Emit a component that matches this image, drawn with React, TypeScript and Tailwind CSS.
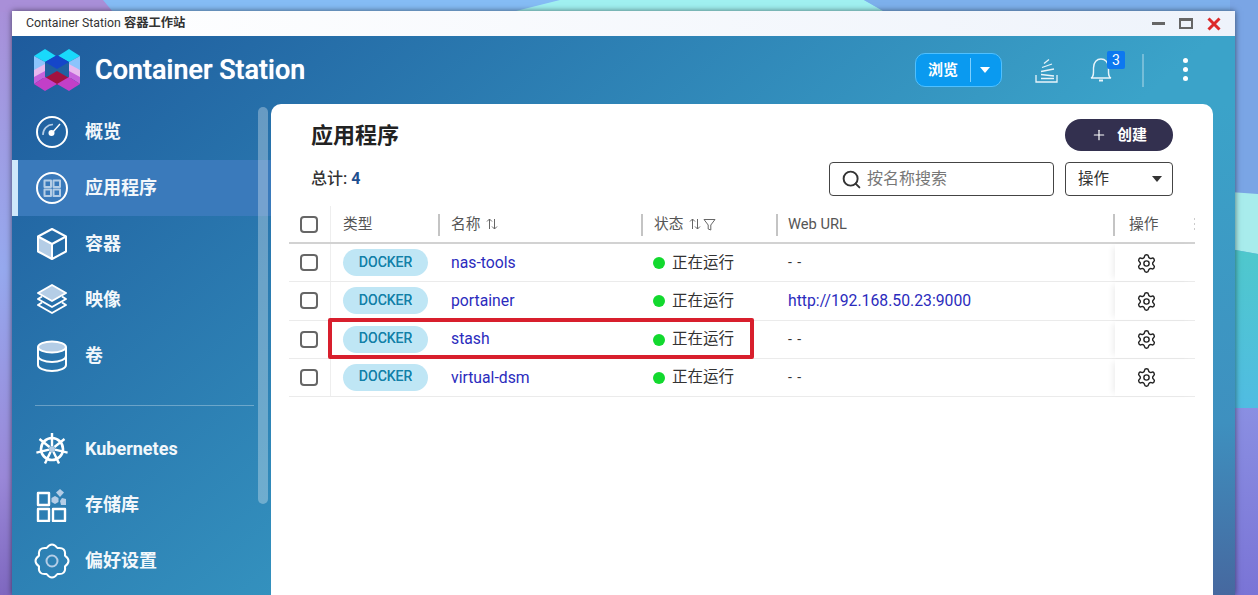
import React from 'react';
import { Search, Settings, Plus } from 'lucide-react';

const pale = '#b4cde6';

function Logo() {
    return (
        <svg width="46" height="43" viewBox="0 0 46 43">
            <path d="M0 7 11 0 22 7 11 13Z" fill="#19d9fb" />
            <path d="M24 7 35 0 46 7 35 13Z" fill="#19d9fb" />
            <path d="M0 7 11 13V20L0 21Z" fill="#8cc4fc" />
            <path d="M46 7 35 13V20L46 21Z" fill="#8cc4fc" />
            <path d="M0 21 11 15V29L0 28Z" fill="#e8b8ee" />
            <path d="M46 21 35 15V29L46 28Z" fill="#e8b8ee" />
            <path d="M0 28 11 22 11 28 0 35Z" fill="#c462dc" />
            <path d="M46 28 35 22 35 28 46 35Z" fill="#c462dc" />
            <path d="M11 13 23 6 35 13 23 20Z" fill="#1546c9" />
            <path d="M11 29 23 22 35 29 23 36Z" fill="#a1123f" />
            <path d="M0 35 11 28 23 35 11 42Z" fill="#c23fc8" />
            <path d="M23 35 35 28 46 35 35 42Z" fill="#c23fc8" />
        </svg>
    );
}

function NavIcon({ name }: { name: string }) {
    const common = { width: 34, height: 34, viewBox: '0 0 34 34', fill: 'none', stroke: 'white', strokeWidth: 2, strokeLinejoin: 'round' as const };
    if (name === 'overview') {
        return (
            <svg {...common}>
                <circle cx="17" cy="17" r="15" />
                <path d="M8 20A10 10 0 0 1 18 9.500" stroke={pale} strokeWidth="1.6" />
                <path d="M17 18 25 9" strokeWidth="1.4" />
                <circle cx="16.500" cy="18" r="3" fill="white" stroke="none" />
            </svg>
        );
    }
    if (name === 'apps') {
        return (
            <svg {...common}>
                <circle cx="17" cy="17" r="15" />
                <rect x="9.500" y="9.500" width="6.500" height="6.500" stroke={pale} strokeWidth="2" />
                <rect x="18.500" y="9.500" width="6.500" height="6.500" stroke={pale} strokeWidth="2" />
                <rect x="9.500" y="18.500" width="6.500" height="6.500" stroke={pale} strokeWidth="2" />
                <rect x="18.500" y="18.500" width="6.500" height="6.500" stroke={pale} strokeWidth="2" />
            </svg>
        );
    }
    if (name === 'container') {
        return (
            <svg {...common}>
                <path d="M3 9.500 17 17V32L3 24.500Z" fill={pale} stroke="none" />
                <path d="M17 2 31 9.500V24.500L17 32 3 24.500V9.500Z" />
                <path d="M3 9.500 17 17 31 9.500M17 17V32" />
            </svg>
        );
    }
    if (name === 'image') {
        return (
            <svg {...common}>
                <path d="M17 2 31 10 17 18 3 10Z" fill={pale} />
                <path d="M7 13.500 3 16 17 24 31 16 27 13.500" />
                <path d="M7 19.500 3 22 17 30 31 22 27 19.500" />
            </svg>
        );
    }
    if (name === 'volume') {
        return (
            <svg {...common}>
                <ellipse cx="17" cy="8" rx="14" ry="5.500" fill={pale} />
                <path d="M3 8V26C3 29 9 32 17 32S31 29 31 26V8" />
                <path d="M3 17C3 20 9 23 17 23S31 20 31 17" />
            </svg>
        );
    }
    if (name === 'kube') {
        return (
            <svg {...common}>
                <circle cx="17" cy="17" r="11" strokeWidth="2.600" />
                <circle cx="17" cy="17" r="3" fill={pale} stroke="none" />
                <path d="M17 1V14M29.500 7 19.500 15M32.600 20.600 20 17.700M24 31.400 18.400 19.700M10 31.400 15.600 19.700M1.400 20.600 14 17.700M4.500 7 14.500 15" strokeWidth="2.400" />
            </svg>
        );
    }
    if (name === 'registry') {
        return (
            <svg {...common} strokeWidth={2.4}>
                <rect x="3" y="5" width="11" height="12" />
                <rect x="3" y="21" width="11" height="12" />
                <rect x="18" y="21" width="12" height="12" />
                <path d="M25 1 29 4.500 25 9 21 4.500Z" fill={pale} stroke="none" />
                <path d="M20 8 23.500 10V14L20 16 16.500 14V10Z" fill={pale} stroke="none" />
                <path d="M27 10 31 11V17H26L25 13Z" fill={pale} stroke="none" />
            </svg>
        );
    }
    return (
        <svg {...common} className="overflow-visible">
            <path d="M11.600 4Q17 -3 22.400 4 31.100 2.900 30 11.600 37 17 30 22.400 31.100 31.100 22.400 30 17 37 11.600 30 2.900 31.100 4 22.400 -3 17 4 11.600 2.900 2.900 11.600 4Z" />
            <circle cx="17" cy="17" r="5.500" stroke={pale} />
        </svg>
    );
}

function NavItem({ icon, label, active }: { icon: string; label: string; active?: boolean }) {
    return (
        <div className={`flex h-[56px] items-center pl-[23px] ${active ? 'border-l-[6px] border-[#cfe8fb] bg-[#3a7abb] !pl-[17px]' : ''}`}>
            <NavIcon name={icon} />
            <span className="ml-[16px] pb-[2px] text-[18px] font-bold text-[#f2f7fb]">{label}</span>
        </div>
    );
}

function SortIcon() {
    return (
        <svg width="12" height="12" viewBox="0 0 12 12" fill="none" stroke="#666" strokeWidth="1" className="ml-[6px]">
            <path d="M3.500 11V1L1 3.500M3.500 1 6 3.500M8.500 1V11L6 8.500M8.500 11 11 8.500" />
        </svg>
    );
}

function HeadCell({ children, divider = true, className = '' }: { children: React.ReactNode; divider?: boolean; className?: string }) {
    return (
        <div className={`relative flex items-center pl-[12px] text-[14.700px] text-[#555] ${className}`}>
            {divider && <div className="absolute top-[8px] -left-px h-[22px] w-[2px] bg-[#c4c4c4]" />}
            {children}
        </div>
    );
}

function CheckBox() {
    return <div className="h-[17px] w-[18px] rounded-[4px] border-2 border-[#666]" />;
}

const rows = [
    { name: 'nas-tools', url: '' },
    { name: 'portainer', url: 'http://192.168.50.23:9000' },
    { name: 'stash', url: '' },
    { name: 'virtual-dsm', url: '' },
];

const gridCols = 'grid grid-cols-[42px_108px_203px_135px_338px_80px]';

function Table() {
    return (
        <div className="relative mt-[10px]">
            <div className={`${gridCols} h-[38px] border-b-2 border-[#d2d2d2]`}>
                <div className="flex items-center justify-center border-r border-[#eee] pr-[2px]"><CheckBox /></div>
                <HeadCell divider={false}>类型</HeadCell>
                <HeadCell>名称<SortIcon /></HeadCell>
                <HeadCell>状态<SortIcon />
                    <svg width="13" height="13" viewBox="0 0 13 13" fill="none" stroke="#666" strokeWidth="1" className="ml-[2px]">
                        <path d="M1 1.500H12L7.800 7V12L5.200 11V7Z" />
                    </svg>
                </HeadCell>
                <HeadCell className="!pl-[11px]">Web URL</HeadCell>
                <HeadCell className="!pl-[14px]" divider={false}>
                    <div className="absolute top-[8px] -left-[2px] h-[22px] w-[2px] bg-[#c4c4c4]" />
                    操作
                    <div className="absolute top-[12px] right-0 flex flex-col gap-[3px]">
                        <div className="h-[2px] w-[1px] bg-[#ccc]" />
                        <div className="h-[2px] w-[1px] bg-[#ccc]" />
                        <div className="h-[2px] w-[1px] bg-[#ccc]" />
                    </div>
                </HeadCell>
            </div>
            {rows.map((row) => (
                <div key={row.name} className={`${gridCols} h-[38.250px] border-b border-[#ebebeb] text-[15.750px] text-[#333]`}>
                    <div className="flex items-center justify-center border-r border-[#eee] pr-[2px]"><CheckBox /></div>
                    <div className="flex items-center pl-[12px]">
                        <span className="flex h-[27px] w-[85px] items-center justify-center rounded-full bg-[#bfe6f5] pb-[1px] text-[14px] text-[#1480a8] [text-shadow:0_0_0.400px_#1480a8]">DOCKER</span>
                    </div>
                    <div className="flex items-center pl-[12px] text-[#2b2bbd]">{row.name}</div>
                    <div className="flex items-center pt-[1px] pl-[11px] text-[15.500px]">
                        <span className="mr-[7px] h-[12px] w-[12px] rounded-full bg-[#12d92e]" />
                        正在运行
                    </div>
                    <div className="flex items-center pl-[11px]">
                        {row.url ? <span className="text-[#2b2bbd]">{row.url}</span> : <span className="text-[14px] tracking-[1px]">- -</span>}
                    </div>
                    <div className="flex items-center justify-center pt-[1px] pr-[18px] shadow-[-5px_0_6px_-3px_rgba(0,0,0,0.07)]">
                        <Settings size={21} strokeWidth={1.600} color="#222" />
                    </div>
                </div>
            ))}
            {/* red annotation round the stash row */}
            <div className="absolute top-[112px] left-[39px] h-[41px] w-[426px] rounded-[2px] border-4 border-[#d81f2d]" />
        </div>
    );
}

export default function App() {
    return (
        <div className="relative h-[595px] w-[1258px] overflow-hidden bg-[#7aa5e5] pt-[11px] pl-[12px] font-['Roboto','Noto_Sans_CJK_SC',sans-serif]">
            {/* desktop wallpaper */}
            <svg className="absolute inset-0" width="1258" height="595" viewBox="0 0 1258 595">
                <defs>
                    <linearGradient id="wl" x1="0" y1="0" x2="0" y2="1">
                        <stop offset="0" stopColor="#a98fd8" />
                        <stop offset="0.45" stopColor="#96a9ee" />
                        <stop offset="0.8" stopColor="#9a88d8" />
                        <stop offset="1" stopColor="#7f68c0" />
                    </linearGradient>
                    <linearGradient id="wr" x1="0" y1="0" x2="0" y2="1">
                        <stop offset="0" stopColor="#8a8fe2" />
                        <stop offset="1" stopColor="#7a74d6" />
                    </linearGradient>
                    <linearGradient id="wt" x1="0" y1="0" x2="0" y2="1">
                        <stop offset="0" stopColor="#4fc8cc" />
                        <stop offset="1" stopColor="#50bce2" />
                    </linearGradient>
                </defs>
                <rect x="0" y="0" width="1258" height="12" fill="#85bcf5" />
                <rect x="0" y="0" width="16" height="595" fill="url(#wl)" />
                <path d="M0 0H103L113 12H0Z" fill="#a98fd8" />
                <path d="M512 12 560 0H864L885 12Z" fill="#a0f0f0" />
                <path d="M864 0H1258V12H885Z" fill="#7db0ec" />
                <rect x="1230" y="0" width="28" height="195" fill="#7aa5e5" />
                <path d="M1230 192 1258 194V254L1230 249Z" fill="#a8ecec" />
                <path d="M1230 249 1258 254V408H1230Z" fill="url(#wt)" />
                <rect x="1230" y="408" width="28" height="187" fill="url(#wr)" />
            </svg>
            <div className="relative flex h-[584px] w-[1223px] flex-col shadow-[0_0_6px_rgba(0,0,0,0.55)]">
                <div className="flex h-[25px] shrink-0 items-center bg-gradient-to-r from-white to-[#eef3fb] pl-[14px] text-[12.300px] text-[#333]">
                    <span>Container Station <span className="font-bold">容器工作站</span></span>
                    <div className="ml-auto flex items-center pr-[14px]">
                        <div className="h-[3px] w-[13px] bg-[#666]" />
                        <div className="ml-[14px] h-[11px] w-[14px] border-2 border-t-[3px] border-[#666]" />
                        <svg width="14" height="14" viewBox="0 0 14 14" stroke="#dc2a2a" strokeWidth="3" className="ml-[14px]">
                            <path d="M1.500 1.500 12.500 12.500M12.500 1.500 1.500 12.500" />
                        </svg>
                    </div>
                </div>
                <div className="flex min-h-0 flex-1 flex-col bg-[linear-gradient(139deg,#1e5b9d_0%,#3ba3c9_64.500%,#3ba3c9_100%)]">
                    <header className="flex h-[68px] shrink-0 items-center pl-[22px]">
                        <Logo />
                        <span className="ml-[15px] text-[27px] font-medium text-white [text-shadow:0_0_0.800px_white]">Container Station</span>
                        <div className="ml-auto flex items-center pr-[47px]">
                            <div className="flex h-[34px] w-[87px] items-center rounded-[10px] border border-[#4fc0ff] bg-[#0a9af0] text-white">
                                <span className="w-[54px] text-center text-[15px] font-bold">浏览</span>
                                <div className="h-[24px] w-px bg-[#7cd0ff]" />
                                <svg width="10" height="7" viewBox="0 0 10 7" fill="white" className="ml-[9px]"><path d="M0 0H10L5 6Z" /></svg>
                            </div>
                            <svg width="24" height="26" viewBox="0 0 24 26" fill="none" stroke="#e8f4fa" strokeWidth="1.300" className="ml-[32px]">
                                <path d="M2 18V25H23V18M7 21.500H20M7 17.500 20 19M7 14.500 20 12M8 10.500 18 7M10 6.500 15 2.500" />
                            </svg>
                            <div className="relative ml-[31px]">
                                <svg width="24" height="26" viewBox="0 0 24 26" fill="none" stroke="#e8f4fa" strokeWidth="1.400">
                                    <path d="M2 21C5 20 4.500 16 4.500 11 4.500 5 8 2 12 2S19.500 5 19.500 11C19.500 16 19 20 22 21Z" />
                                    <path d="M10 23.500H14" strokeWidth="2" />
                                </svg>
                                <div className="absolute -top-[6px] left-[18px] flex h-[18px] w-[18px] items-center justify-center rounded-[2px] bg-[#0d78f0] text-[14px] text-white">3</div>
                            </div>
                            <div className="ml-[29px] h-[33px] w-[2px] bg-white/30" />
                            <div className="mb-[2px] ml-[39px] flex flex-col gap-[4px]">
                                <div className="h-[5px] w-[5px] rounded-full bg-white" />
                                <div className="h-[5px] w-[5px] rounded-full bg-white" />
                                <div className="h-[5px] w-[5px] rounded-full bg-white" />
                            </div>
                        </div>
                    </header>
                    <div className="flex min-h-0 flex-1">
                        <aside className="relative w-[259px] shrink-0 overflow-hidden">
                            <NavItem icon="overview" label="概览" />
                            <NavItem icon="apps" label="应用程序" active />
                            <NavItem icon="container" label="容器" />
                            <NavItem icon="image" label="映像" />
                            <NavItem icon="volume" label="卷" />
                            <div className="mt-[21px] mb-[15px] ml-[23px] h-px w-[219px] bg-white/30" />
                            <NavItem icon="kube" label="Kubernetes" />
                            <NavItem icon="registry" label="存储库" />
                            <NavItem icon="prefs" label="偏好设置" />
                            {/* scrollbar sits over the nav */}
                            <div className="absolute top-[3px] right-[3px] h-[397px] w-[10px] rounded-full bg-white/30" />
                        </aside>
                        <main className="w-[942px] shrink-0 rounded-t-[10px] bg-white px-[18px]">
                            <div className="px-[22px] pt-[15px]">
                                <div className="flex h-[32px] items-center justify-between">
                                    <h1 className="text-[22px] font-bold text-[#222]">应用程序</h1>
                                    <button className="flex h-[32px] w-[108px] items-center justify-center rounded-full bg-[#33304f] text-[15px] font-bold text-white">
                                        <Plus size={16} strokeWidth={1.800} className="mr-[10px]" />
                                        创建
                                    </button>
                                </div>
                                <div className="mt-[11px] flex h-[34px] items-center">
                                    <span className="text-[16px] font-medium text-[#333]">总计: <span className="font-bold text-[#1f4f8f]">4</span></span>
                                    <div className="ml-auto flex h-[34px] w-[225px] items-center rounded-[4px] border border-[#444] pl-[11px] text-[16px] text-[#777]">
                                        <Search size={21} strokeWidth={2.200} color="#333" className="mr-[5px]" />
                                        按名称搜索
                                    </div>
                                    <div className="ml-[11px] flex h-[34px] w-[108px] items-center justify-between rounded-[4px] border border-[#444] pt-[1px] pr-[10px] pl-[12px] text-[15.500px] text-[#333]">
                                        操作
                                        <svg width="10" height="7" viewBox="0 0 10 7" fill="#333"><path d="M0 0H10L5 6Z" /></svg>
                                    </div>
                                </div>
                            </div>
                            <Table />
                        </main>
                        <div className="w-[22px] shrink-0 bg-[linear-gradient(to_bottom,#3ba3c9_0%,#3e90bf_65%,#46689f_100%)]" />
                    </div>
                </div>
            </div>
        </div>
    );
}
